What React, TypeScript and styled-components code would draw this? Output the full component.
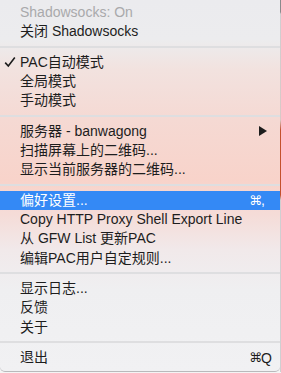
import styled, { createGlobalStyle } from 'styled-components';

const GlobalStyle = createGlobalStyle`
	body {
		margin: 0;
		background: #f4f4f4;
	}
`;

type Entry =
	| { kind: 'sep' }
	| {
			kind: 'item';
			label: string;
			checked?: boolean;
			disabled?: boolean;
			active?: boolean;
			submenu?: boolean;
			shortcut?: string;
	  };

const entries: Entry[] = [
	{ kind: 'item', label: 'Shadowsocks: On', disabled: true },
	{ kind: 'item', label: '关闭 Shadowsocks' },
	{ kind: 'sep' },
	{ kind: 'item', label: 'PAC自动模式', checked: true },
	{ kind: 'item', label: '全局模式' },
	{ kind: 'item', label: '手动模式' },
	{ kind: 'sep' },
	{ kind: 'item', label: '服务器 - banwagong', submenu: true },
	{ kind: 'item', label: '扫描屏幕上的二维码...' },
	{ kind: 'item', label: '显示当前服务器的二维码...' },
	{ kind: 'sep' },
	{ kind: 'item', label: '偏好设置...', active: true, shortcut: ',' },
	{ kind: 'item', label: 'Copy HTTP Proxy Shell Export Line' },
	{ kind: 'item', label: '从 GFW List 更新PAC' },
	{ kind: 'item', label: '编辑PAC用户自定规则...' },
	{ kind: 'sep' },
	{ kind: 'item', label: '显示日志...' },
	{ kind: 'item', label: '反馈' },
	{ kind: 'item', label: '关于' },
	{ kind: 'sep' },
	{ kind: 'item', label: '退出', shortcut: 'Q' },
];

function App() {
	return (
		<Frame>
			<GlobalStyle />
			<Menu>
				{entries.map((e, i) =>
					e.kind === 'sep' ? (
						<Separator key={i} />
					) : (
						<Item key={i} $active={e.active} $disabled={e.disabled}>
							<CheckCell>
								{e.checked && (
									<svg width='12' height='12' viewBox='0 0 12 12'>
										<path
											d='M1.2 6.6 L4.3 10 L10.8 1.4'
											fill='none'
											stroke='#1d1d1d'
											strokeWidth='1.6'
										/>
									</svg>
								)}
							</CheckCell>
							<Label>{e.label}</Label>
							<Trailing>
								{e.submenu && (
									<Arrow width='8' height='10' viewBox='0 0 8 10'>
										<path d='M0 0 L8 5 L0 10 Z' fill='#1d1d1d' />
									</Arrow>
								)}
								{e.shortcut && (
									<>
										<Cmd>⌘</Cmd>
										<Key>{e.shortcut}</Key>
									</>
								)}
							</Trailing>
						</Item>
					)
				)}
			</Menu>
			<Backdrop />
		</Frame>
	);
}

const Frame = styled.div`
	display: flex;
	align-items: flex-start;
	width: 281px;
`;

const Menu = styled.div`
	width: 280px;
	padding: 3px 0 4px;
	background: linear-gradient(
		to bottom,
		#ebebee 0px,
		#ececee 40px,
		#f2e2df 70px,
		#f5d9d3 120px,
		#f8d3ca 180px,
		#f5dcd8 215px,
		#f1e9ea 250px,
		#efeff1 290px,
		#f1f1f3 373px
	);
	border-bottom: 1px solid #b9b9bb;
	border-radius: 0 0 5px 5px;
	font-family: 'Liberation Sans', 'Noto Sans CJK SC', sans-serif;
	font-size: 14px;
`;

const Item = styled.div<{ $active?: boolean; $disabled?: boolean }>`
	display: grid;
	grid-template-columns: 20px 1fr auto;
	align-items: center;
	height: 19.33px;
	padding-right: 7px;
	color: ${(p) => (p.$disabled ? '#a9a9ab' : p.$active ? '#ffffff' : '#1d1d1d')};
	background: ${(p) => (p.$active ? '#3489f5' : 'transparent')};
	white-space: nowrap;
`;

const CheckCell = styled.div`
	display: flex;
	align-items: center;
	padding-left: 4px;
`;

const Label = styled.span`
	line-height: 17px;
`;

const Trailing = styled.div`
	display: flex;
	align-items: center;
	min-width: 23px;
`;

const Arrow = styled.svg`
	margin-left: 9px;
	margin-right: 6px;
`;

const Cmd = styled.span`
	width: 11px;
	font-family: 'DejaVu Sans', sans-serif;
	font-size: 13px;
`;

const Key = styled.span`
	width: 12px;
	padding-left: 1px;
`;

const Separator = styled.div`
	height: 11px;
	display: flex;
	align-items: center;
	&::after {
		content: '';
		flex: 1;
		height: 2px;
		background: #dedee0;
	}
`;

const Backdrop = styled.div`
	width: 1px;
	align-self: stretch;
	background: linear-gradient(
		to bottom,
		#8a8a8c 0px,
		#8a8a8c 12px,
		#cfcfd1 14px,
		#d8c9c6 120px,
		#c4502c 130px,
		#c4502c 195px,
		#cfcfd1 200px,
		#cfcfd1 373px
	);
`;

export default App;
